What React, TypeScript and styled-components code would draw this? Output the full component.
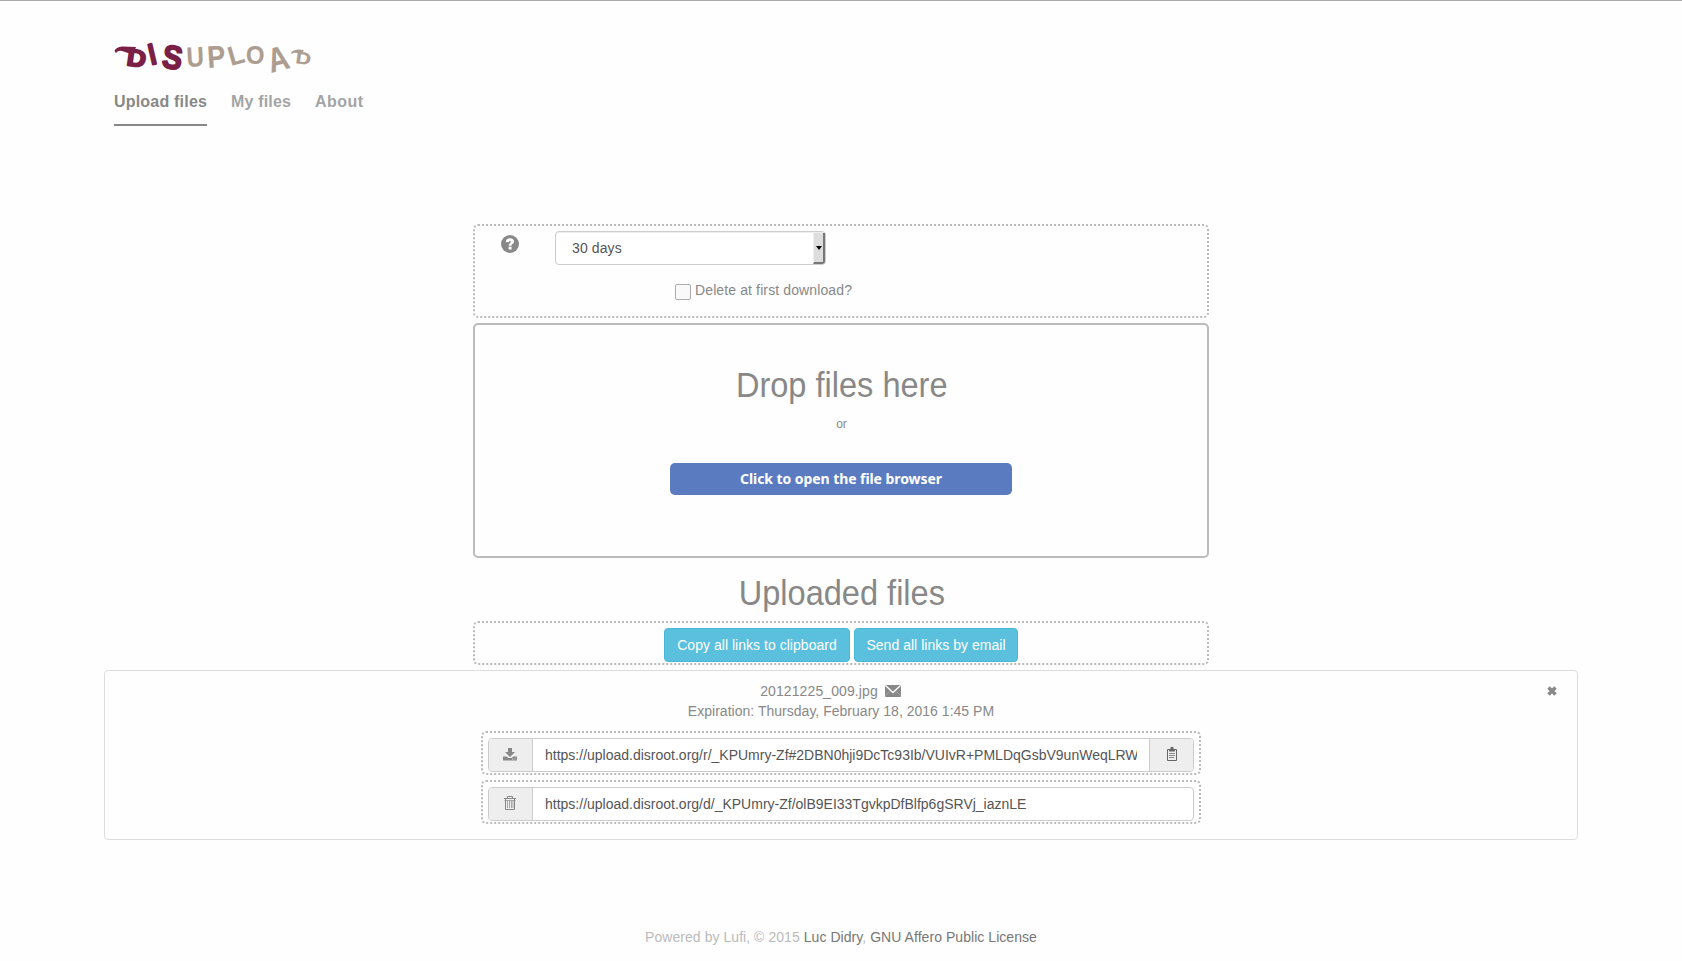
import React from 'react';
import styled, { createGlobalStyle } from 'styled-components';

const Global = createGlobalStyle`
  * { box-sizing: border-box; }
  body {
    margin: 0;
    background: #fefefe;
    color: #888;
    font: 14px/20px "Liberation Sans", Arial, sans-serif;
  }
`;

const Page = styled.div`
  height: 961px;
  border-top: 1px solid #aaa;
  display: flex;
  flex-direction: column;
  align-items: center;
  overflow: hidden;
`;

const Header = styled.header`
  width: 1454px;
  height: 223px;
  padding-top: 38px;
`;

const Logo = styled.svg`
  display: block;
  overflow: visible;
  font-family: "Liberation Sans", Arial, sans-serif;
  font-weight: bold;
`;

const Nav = styled.nav`
  display: flex;
  gap: 24px;
  margin-top: 12px;
`;

const NavLink = styled.a<{ $active?: boolean; $spacing: number }>`
  height: 37px;
  font-size: 16px;
  line-height: 25px;
  font-weight: bold;
  letter-spacing: ${p => p.$spacing}px;
  color: ${p => (p.$active ? '#888' : '#a4a4a4')};
  border-bottom: 2px solid ${p => (p.$active ? '#888' : 'transparent')};
`;

const Panel = styled.section<{ $height: number; $solid?: boolean; $width?: number }>`
  width: ${p => p.$width ?? 736}px;
  height: ${p => p.$height}px;
  flex: none;
  border: 2px ${p => (p.$solid ? 'solid' : 'dotted')} #bbb;
  border-radius: 5px;
`;

const Options = styled(Panel)`
  margin-bottom: 5px;
  padding: 5px 24px 0 26px;
`;

const OptionRow = styled.div`
  display: flex;
  align-items: flex-start;
  gap: 36px;
`;

const HelpIcon = styled.svg`
  margin-top: 4px;
  flex: none;
`;

const Select = styled.div`
  display: flex;
  justify-content: space-between;
  width: 271px;
  height: 34px;
  padding-left: 16px;
  border: 1px solid #ccc;
  border-radius: 4px;
  background: #fff;
  color: #555;
  line-height: 32px;
  letter-spacing: 0.1px;
  box-shadow: inset 0 1px 1px rgba(0, 0, 0, 0.075);
`;

const SelectArrow = styled.span`
  display: flex;
  align-items: center;
  justify-content: center;
  width: 12px;
  margin-top: 1px;
  border: solid #777;
  border-width: 0 2px 2px 0;
  border-left: 1px solid #eee;
  border-radius: 0 0 3px 0;
  background: #ddd;
`;

const CheckRow = styled.label`
  display: flex;
  gap: 4px;
  margin: 15px 0 0 174px;
  letter-spacing: 0.12px;
`;

const Checkbox = styled.span`
  width: 16px;
  height: 16px;
  margin-top: 4px;
  border: 1px solid #aaa;
  border-radius: 2px;
  background: #f9f9f9;
`;

const DropZone = styled(Panel)`
  display: flex;
  flex-direction: column;
  align-items: center;
  padding-top: 40px;
`;

const Heading = styled.h1`
  margin: 0;
  padding-left: 2px;
  font-size: 35px;
  font-weight: normal;
  line-height: 40px;
  white-space: nowrap;
  transform: scaleX(0.93);
`;

const Or = styled.p`
  margin: 9px 0 0;
  padding-left: 1px;
  font-size: 12px;
`;

const BrowseButton = styled.button`
  width: 342px;
  height: 32px;
  margin-top: 29px;
  border: 0;
  border-radius: 5px;
  background: #5b7bc1;
  color: #fff;
  font: bold 14px/32px "Noto Sans", sans-serif;
  letter-spacing: -0.07px;
  padding: 0;
`;

const UploadedTitle = styled.div`
  margin: 15px 0 8px;
`;

const ButtonPanel = styled(Panel)`
  display: flex;
  justify-content: center;
  gap: 4px;
  padding-top: 5px;
`;

const InfoButton = styled.button<{ $width: number }>`
  width: ${p => p.$width}px;
  height: 34px;
  padding: 0;
  border: 1px solid #46b8da;
  border-radius: 4px;
  background: #5bc0de;
  color: #fff;
  font: 14px/32px "Liberation Sans", Arial, sans-serif;
  letter-spacing: 0.03px;
`;

const Card = styled.section`
  position: relative;
  display: flex;
  flex-direction: column;
  align-items: center;
  width: 1474px;
  height: 170px;
  flex: none;
  margin-top: 5px;
  padding-top: 10px;
  border: 1px solid #ddd;
  border-radius: 4px;
`;

const FileName = styled.div`
  display: flex;
  align-items: center;
  gap: 7px;
  margin-right: 21px;
  letter-spacing: 0.1px;
`;

const Expiration = styled.div`
  margin-bottom: 10px;
  letter-spacing: 0.02px;
`;

const CloseIcon = styled.svg`
  position: absolute;
  top: 15px;
  right: 20px;
`;

const LinkPanel = styled(Panel)`
  padding: 5px;
  margin-bottom: 5px;
`;

const InputGroup = styled.div`
  display: flex;
  height: 34px;
  border: 1px solid #ccc;
  border-radius: 4px;
  background: #fff;
  overflow: hidden;
`;

const Addon = styled.span<{ $end?: boolean }>`
  display: flex;
  align-items: center;
  justify-content: center;
  flex: none;
  width: 44px;
  padding: ${p => (p.$end ? '0 0 2px 1px' : '0 1px 2px 0')};
  background: #eee;
  border: solid #ccc;
  border-width: ${p => (p.$end ? '0 0 0 1px' : '0 1px 0 0')};
`;

const Url = styled.span`
  flex: 1;
  min-width: 0;
  margin: 0 12px;
  overflow: hidden;
  white-space: nowrap;
  line-height: 32px;
  color: #555;
`;

const Footer = styled.footer`
  margin-top: 87px;
  color: #bbb;
  white-space: nowrap;
  letter-spacing: 0.05px;
`;

const FooterLink = styled.a`
  color: #777;
`;

const maroon = '#7a1f45';
const taupe = '#ad9d90';

// letter, x, baseline, font size, rotation, horizontal stretch
const letters: [string, number, number, number, number, number][] = [
  ['D', 12, 26, 24, 8, 1.1],
  ['I', 37, 26, 30, -13, 0.85],
  ['S', 47, 28, 33, 9, 0.9],
  ['U', 73, 28, 28, -3, 0.86],
  ['P', 94, 29, 31, -4, 0.87],
  ['L', 117, 27, 27, -16, 0.95],
  ['O', 132, 25, 25, 0, 0.95],
  ['A', 157, 34, 34, -15, 0.85],
  ['D', 181, 24, 17, 8, 1.25],
];

export default function App() {
  return (
    <Page>
      <Global />
      <Header>
        <Logo width="202" height="38">
          {letters.map(([c, x, y, size, turn, stretch], i) => (
            <text
              key={i}
              fontSize={size}
              fontWeight="bold"
              fill={i < 3 ? maroon : taupe}
              stroke={i < 3 ? maroon : taupe}
              strokeWidth={i < 3 ? 1.8 : 0.2}
              strokeLinejoin="round"
              transform={`translate(${x} ${y}) rotate(${turn}) scale(${stretch} 1)`}
            >
              {c}
            </text>
          ))}
          <path d="M.5 12Q2 8 8 7.5L22 8L20 13L14 14L8 12Q4 11 2 14Z" fill={maroon} />
          <path d="M177 14Q178 11 184 10.5L190 11L188 14L183 14Q179 13 178 15Z" fill={taupe} />
        </Logo>
        <Nav>
          <NavLink $active $spacing={0.2}>Upload files</NavLink>
          <NavLink $spacing={0.15}>My files</NavLink>
          <NavLink $spacing={0.5}>About</NavLink>
        </Nav>
      </Header>

      <Options $height={94}>
        <OptionRow>
          <HelpIcon width="18" height="18" viewBox="0 0 18 18">
            <circle cx="9" cy="9" r="9" fill="#888" />
            <path d="M4.8 6.9Q5 3.2 9 3.2T13 6.6C13 9 10.5 9 10.5 10.7H7.7C7.7 8.4 9.9 8.2 9.9 6.8Q9.9 5.9 9 5.9T7.7 7.2Z" fill="#fff" />
            <rect x="7.6" y="11.7" width="3" height="2.8" fill="#fff" />
          </HelpIcon>
          <Select>
            30 days
            <SelectArrow>
              <svg width="6" height="4"><path d="M0 0H6L3 4Z" fill="#000" /></svg>
            </SelectArrow>
          </Select>
        </OptionRow>
        <CheckRow><Checkbox />Delete at first download?</CheckRow>
      </Options>

      <DropZone $height={235} $solid>
        <Heading>Drop files here</Heading>
        <Or>or</Or>
        <BrowseButton>Click to open the file browser</BrowseButton>
      </DropZone>

      <UploadedTitle><Heading>Uploaded files</Heading></UploadedTitle>
      <ButtonPanel $height={44}>
        <InfoButton $width={186}>Copy all links to clipboard</InfoButton>
        <InfoButton $width={164}>Send all links by email</InfoButton>
      </ButtonPanel>

      <Card>
        <CloseIcon width="10" height="10" viewBox="0 0 10 10">
          <path d="M1.5 1.5L8.5 8.5M8.5 1.5L1.5 8.5" stroke="#888" strokeWidth="3.4" />
        </CloseIcon>
        <FileName>
          20121225_009.jpg
          <svg width="16" height="12" viewBox="0 0 16 12">
            <rect width="16" height="12" rx="1" fill="#888" />
            <path d="M.5 .5L8 7.5L15.5 .5" fill="none" stroke="#fefefe" strokeWidth="1.3" />
            <path d="M.5 10.5L4.5 6.5M15.5 10.5L11.5 6.5" stroke="#b5b5b5" strokeWidth=".7" />
          </svg>
        </FileName>
        <Expiration>Expiration: Thursday, February 18, 2016 1:45 PM</Expiration>
        <LinkPanel $height={44} $width={720}>
          <InputGroup>
            <Addon>
              <svg width="14" height="13" viewBox="0 0 14 13">
                <path d="M5 0H9V4H12L7 9L2 4H5ZM0 8.5H3.5L5.5 10H8.5L10.5 8.5H14V12.5H0Z" fill="#888" />
                <path d="M9 11H10M11.5 11H12.5" stroke="#eee" />
              </svg>
            </Addon>
            <Url>https://upload.disroot.org/r/_KPUmry-Zf#2DBN0hji9DcTc93Ib/VUIvR+PMLDqGsbV9unWeqLRW</Url>
            <Addon $end>
              <svg width="10" height="14" viewBox="0 0 10 14">
                <path d="M.5 2.5H9.5V13.5H.5Z" fill="#eee" stroke="#666" />
                <path d="M2 2H3.5V0H6.5V2H8V4.5H2Z" fill="#666" />
                <path d="M2 6.5H8M2 8.5H8M2 10.5H7" stroke="#888" />
              </svg>
            </Addon>
          </InputGroup>
        </LinkPanel>
        <LinkPanel $height={44} $width={720}>
          <InputGroup>
            <Addon>
              <svg width="12" height="14" viewBox="0 0 12 14" fill="none" stroke="#888">
                <path d="M0 2.5H12M3.5 2V.5H8.5V2M1.5 3V13.5H10.5V3" />
                <path d="M.5 4.5H11.5M3.5 5V12M5.5 5V12M7.5 5V12M9 5V12" strokeWidth=".7" />
              </svg>
            </Addon>
            <Url>https://upload.disroot.org/d/_KPUmry-Zf/olB9EI33TgvkpDfBlfp6gSRVj_iaznLE</Url>
          </InputGroup>
        </LinkPanel>
      </Card>

      <Footer>
        Powered by Lufi, © 2015 <FooterLink>Luc Didry</FooterLink>, <FooterLink>GNU Affero Public License</FooterLink>
      </Footer>
    </Page>
  );
}
